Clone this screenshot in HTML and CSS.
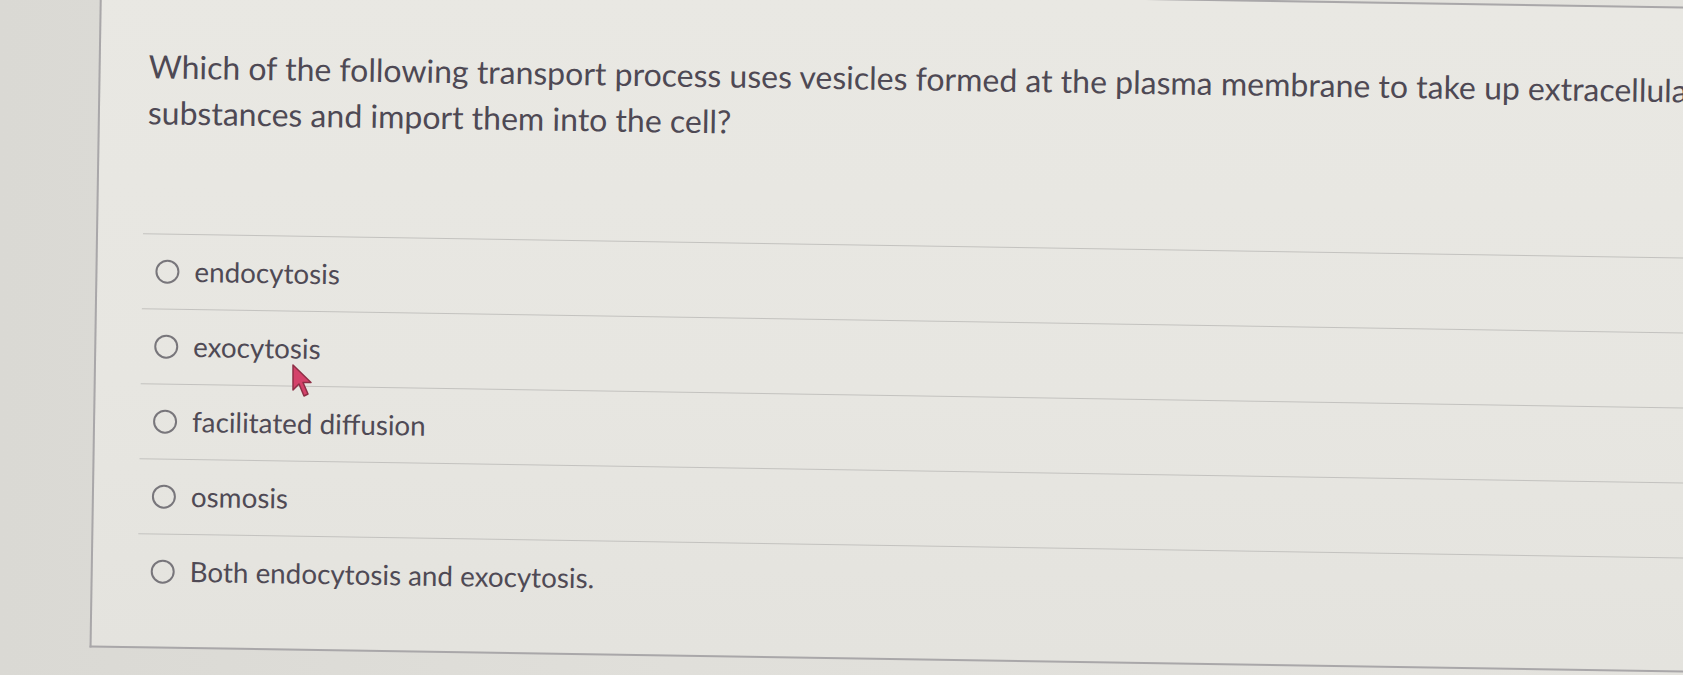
FILE: index.html
```html
<!DOCTYPE html>
<html lang="en">
<head>
<meta charset="utf-8">
<title>Quiz question</title>
<link rel="stylesheet" href="styles.css">
</head>
<body>
<div class="stage">
  <div class="panel">
    <p class="question">Which of the following transport process uses vesicles formed at the plasma membrane to take up extracellular<br>substances and import them into the cell?</p>
    <ul class="answers">
      <li class="answer"><span class="radio"></span><span class="label">endocytosis</span></li>
      <li class="answer"><span class="radio"></span><span class="label">exocytosis</span></li>
      <li class="answer"><span class="radio"></span><span class="label">facilitated diffusion</span></li>
      <li class="answer"><span class="radio"></span><span class="label">osmosis</span></li>
      <li class="answer"><span class="radio"></span><span class="label">Both endocytosis and exocytosis.</span></li>
    </ul>
  </div>
</div>
<svg class="cursor" width="22" height="36" viewBox="0 0 22 36" aria-hidden="true">
  <path d="M2 2 L2 27 L8 21 L13 33 L17 31 L12 19.5 L20 19.5 Z" fill="#d4426a" stroke="#8e2f46" stroke-width="1.5" stroke-linejoin="round"/>
</svg>
</body>
</html>
```
FILE: styles.css
```css
html, body {
  margin: 0;
  padding: 0;
  width: 1683px;
  height: 675px;
  overflow: hidden;
}

body {
  background: linear-gradient(90deg, #dad9d4 0%, #e0dfda 40%, #e4e3de 100%);
  font-family: Lato, "Open Sans", sans-serif;
  color: #4b4651;
  position: relative;
}

.stage {
  transform: rotate(0.9deg);
  transform-origin: 0 0;
  padding-left: 100px;
  margin-top: -20px;
}

.panel {
  width: 1720px;
  border: 2px solid #a9a7a9;
  border-right: none;
  background: linear-gradient(180deg, #e9e8e3 0%, #e7e6e1 60%, #e4e3de 100%);
  padding: 59px 0 38px 48px;
  box-sizing: border-box;
}

.question {
  margin: 0 0 98px 0;
  font-size: 32px;
  line-height: 46px;
  white-space: nowrap;
  color: #4e4954;
}

.answers {
  list-style: none;
  margin: 0 0 0 -3px;
  padding: 0;
}

.answer {
  display: flex;
  align-items: center;
  height: 74px;
  border-top: 1.5px solid #c3c2bf;
  padding-left: 13px;
  gap: 15px;
}

.radio {
  width: 20px;
  height: 20px;
  border: 2px solid #78767b;
  border-radius: 50%;
  flex: none;
}

.label {
  font-size: 27.8px;
  line-height: 34px;
  color: #4f4a55;
}

.cursor {
  position: absolute;
  left: 291px;
  top: 363px;
}
```
